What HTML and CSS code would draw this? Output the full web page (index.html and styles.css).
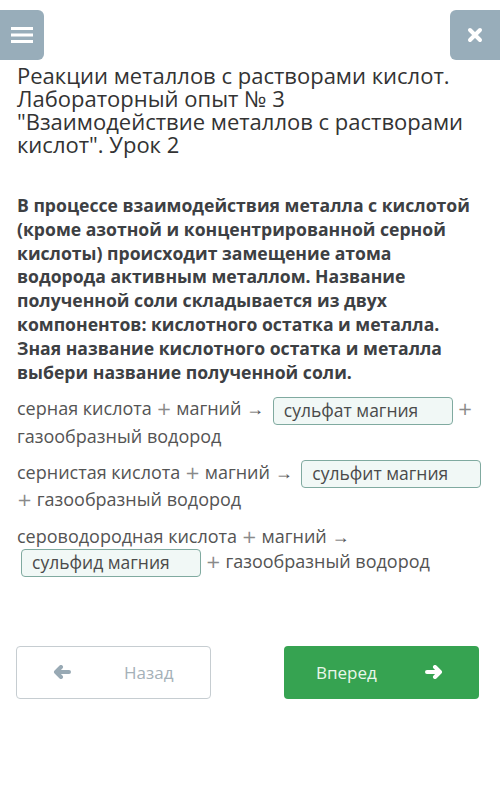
FILE: index.html
```html
<!DOCTYPE html>
<html lang="ru">

<head>
    <meta charset="UTF-8">
    <meta name="viewport" content="width=device-width, initial-scale=1.0">
    <title>Урок 2</title>
    <link rel="stylesheet" href="styles.css">
</head>

<body>
    <header class="top-bar">
        <button class="menu-button" aria-label="Меню">
            <svg width="22" height="18" viewBox="0 0 22 18">
                <rect x="0" y="1" width="22" height="3" fill="#fff"/>
                <rect x="0" y="7.5" width="22" height="3" fill="#fff"/>
                <rect x="0" y="14" width="22" height="3" fill="#fff"/>
            </svg>
        </button>
        <button class="close-button" aria-label="Закрыть">
            <svg width="16" height="16" viewBox="0 0 16 16">
                <path d="M3 3 L13 13 M13 3 L3 13" stroke="#fff" stroke-width="4" stroke-linecap="round"/>
            </svg>
        </button>
    </header>

    <main class="lesson">
        <h1>Реакции металлов с растворами кислот. Лабораторный опыт № 3<br>"Взаимодействие металлов с растворами кислот". Урок 2</h1>

        <p class="task">В процессе взаимодействия металла с кислотой (кроме азотной и концентрированной серной кислоты) происходит замещение атома водорода активным металлом. Название полученной соли складывается из двух компонентов: кислотного остатка и металла. Зная название кислотного остатка и металла выбери название полученной соли.</p>

        <p class="equation">серная кислота <span class="op">+</span> магний → <span class="answer">сульфат магния</span> <span class="op">+</span> газообразный водород</p>
        <p class="equation">сернистая кислота <span class="op">+</span> магний → <span class="answer">сульфит магния</span> <span class="op">+</span> газообразный водород</p>
        <p class="equation">сероводородная кислота <span class="op">+</span> магний → <span class="answer">сульфид магния</span> <span class="op">+</span> газообразный водород</p>
    </main>

    <nav class="nav-buttons">
        <button class="back-button">
            <svg width="20" height="14" viewBox="0 0 20 14">
                <path d="M17 7 H5 M9 2 L4 7 L9 12" stroke="#98a9b4" stroke-width="4" fill="none" stroke-linecap="round" stroke-linejoin="round"/>
            </svg>
            <span>Назад</span>
        </button>
        <button class="next-button">
            <span>Вперед</span>
            <svg width="20" height="14" viewBox="0 0 20 14">
                <path d="M3 7 H15 M11 2 L16 7 L11 12" stroke="#fff" stroke-width="4" fill="none" stroke-linecap="round" stroke-linejoin="round"/>
            </svg>
        </button>
    </nav>
</body>

</html>
```

FILE: styles.css
```css
body, h1, p {
    margin: 0;
    padding: 0;
}

body {
    font-family: 'Open Sans', 'Noto Sans', sans-serif;
    background-color: #fff;
    color: #333;
}

button {
    border: none;
    cursor: pointer;
    font-family: inherit;
}

/* Top bar */
.top-bar {
    display: flex;
    justify-content: space-between;
    margin-top: 10px;
}

.menu-button,
.close-button {
    height: 50px;
    background-color: #98adba;
    display: flex;
    align-items: center;
    justify-content: center;
    padding: 0;
}

.menu-button {
    width: 44px;
    border-radius: 0 6px 6px 0;
}

.close-button {
    width: 50px;
    border-radius: 6px 0 0 6px;
}

/* Lesson text */
.lesson {
    padding: 0 17px;
}

h1 {
    font-size: 22px;
    font-weight: normal;
    line-height: 23px;
    color: #333;
    margin-top: 4px;
}

.task {
    font-size: 17.6px;
    font-weight: bold;
    line-height: 23.8px;
    color: #3d4043;
    margin-top: 38px;
}

.equation {
    font-size: 18px;
    line-height: 24px;
    color: #545454;
    margin-top: 12px;
    margin-bottom: 12px;
}

.op {
    font-family: 'DejaVu Sans', sans-serif;
    color: #8a8a8a;
}

.answer {
    display: inline-block;
    box-sizing: border-box;
    width: 180px;
    height: 28px;
    line-height: 24px;
    padding: 0 10px;
    margin: -1px 0 -1px 4px;
    border: 1px solid #80aaa0;
    border-radius: 4px;
    background-color: #f1f8f6;
    color: #4a4a4a;
    font-size: 17.5px;
    vertical-align: middle;
}

/* Navigation */
.nav-buttons {
    display: flex;
    justify-content: space-between;
    padding: 0 21px 0 16px;
    margin-top: 70px;
}

.back-button,
.next-button {
    width: 195px;
    height: 53px;
    border-radius: 4px;
    font-size: 17px;
    display: flex;
    align-items: center;
}

.back-button {
    background-color: #fff;
    border: 1px solid #c6cdd1;
    color: #a5b1b8;
    padding: 0 0 0 35px;
}

.back-button span {
    margin-left: 52px;
}

.next-button {
    background-color: #36a351;
    color: #e9f7ea;
    padding: 0 35px 0 32px;
    justify-content: space-between;
}
```
